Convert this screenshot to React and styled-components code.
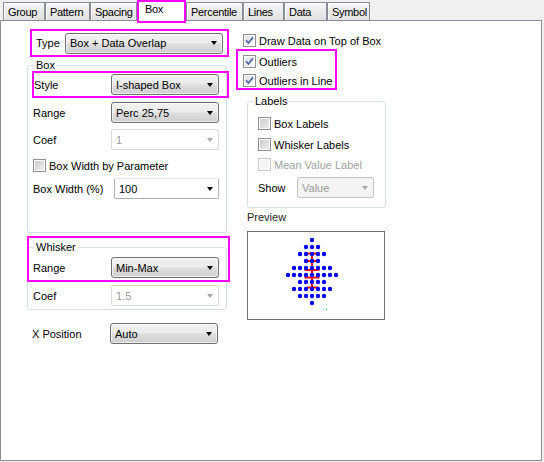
import React from 'react';
import styled, { createGlobalStyle } from 'styled-components';

const GlobalStyle = createGlobalStyle`
  html, body {
    margin: 0;
    padding: 0;
    background: #f0f0f0;
  }
  body {
    font-family: "Liberation Sans", Arial, sans-serif;
    font-size: 11px;
    color: #000;
  }
`;

const Window = styled.div`
  width: 544px;
  height: 462px;
  background: #f0f0f0;
`;

const TabBar = styled.div`
  display: flex;
  align-items: flex-end;
  height: 20px;
  padding-left: 3px;
  position: relative;
  z-index: 2;
`;

const Tab = styled.div`
  box-sizing: border-box;
  width: ${({ $w }) => $w}px;
  height: 18px;
  padding: 3px 0 0 4px;
  line-height: 13px;
  letter-spacing: -0.3px;
  border: 1px solid #898c95;
  border-bottom: none;
  background: linear-gradient(#f5f5f5, #ebebeb 50%, #e1e1e1);
  box-shadow: inset 1px 1px 0 #fff;
  white-space: nowrap;
  overflow: hidden;
`;

const ActiveTab = styled.div`
  box-sizing: border-box;
  width: ${({ $w }) => $w}px;
  height: 19px;
  margin: 2px 2px -1px 2px;
  padding: 1px 0 0 6px;
  line-height: 13px;
  letter-spacing: -0.3px;
  background: #fff;
  outline: 2px solid #ff00ff;
  align-self: flex-start;
`;

const Panel = styled.div`
  box-sizing: border-box;
  width: 542px;
  height: 441px;
  border: 1px solid #898c95;
  background: #fff;
  display: flex;
  padding-left: 26px;
  gap: 16px;
`;

const Column = styled.div`
  display: flex;
  flex-direction: column;
  width: ${({ $w }) => $w}px;
  padding-top: ${({ $pt }) => $pt}px;
`;

const Row = styled.div`
  display: flex;
  align-items: center;
  height: ${({ $h }) => $h || 21}px;
  margin-top: ${({ $mt }) => $mt || 0}px;
  margin-left: ${({ $ml }) => $ml || 0}px;
  white-space: nowrap;
`;

const MarkedRow = styled(Row)`
  width: ${({ $w }) => $w}px;
  outline: 2px solid #ff00ff;
  position: relative;
  z-index: 1;
`;

const Label = styled.span`
  box-sizing: border-box;
  width: ${({ $w }) => $w}px;
  padding-left: ${({ $pl }) => $pl || 0}px;
  color: ${({ $disabled }) => ($disabled ? '#a0a0a0' : '#000')};
`;

const Group = styled.div`
  box-sizing: border-box;
  position: relative;
  width: ${({ $w }) => $w}px;
  height: ${({ $h }) => $h}px;
  margin-top: ${({ $mt }) => $mt}px;
  margin-left: ${({ $ml }) => $ml || 0}px;
  border: 1px solid #d5dfe5;
  border-radius: 3px;
  display: flex;
  flex-direction: column;
`;

const Legend = styled.span`
  position: absolute;
  top: -7px;
  left: ${({ $left }) => $left}px;
  padding: 0 2px;
  line-height: 13px;
  background: #fff;
`;

const Mark = styled.div`
  position: absolute;
  left: -1px;
  top: -12px;
  width: 203px;
  height: 46px;
  box-sizing: border-box;
  border: 2px solid #ff00ff;
  pointer-events: none;
  z-index: 2;
`;

const comboSkins = {
  button: `
    border: 1px solid #707070;
    border-radius: 3px;
    background: linear-gradient(#f2f2f2, #ebebeb 45%, #dddddd 55%, #cfcfcf);
    box-shadow: inset 0 0 0 1px rgba(255,255,255,0.6);
    color: #000;
  `,
  edit: `
    border: 1px solid #abadb3;
    border-top-color: #e3e3e3;
    border-radius: 2px;
    background: #fff;
    color: #000;
  `,
  disabled: `
    border: 1px solid #d9d9d9;
    border-radius: 2px;
    background: #fff;
    color: #9a9a9a;
  `,
  disabledFill: `
    border: 1px solid #c2c2c2;
    border-radius: 3px;
    background: #f4f4f4;
    color: #9a9a9a;
  `,
};

const ComboBox = styled.div`
  box-sizing: border-box;
  width: ${({ $w }) => $w}px;
  height: 21px;
  display: flex;
  align-items: center;
  padding-left: 4px;
  ${({ $skin }) => comboSkins[$skin]}
`;

const Arrow = styled.span`
  margin-left: auto;
  margin-right: 5px;
  width: 0;
  height: 0;
  border-left: 3.5px solid transparent;
  border-right: 3.5px solid transparent;
  border-top: 4px solid ${({ $disabled }) => ($disabled ? '#a8a8a8' : '#000')};
`;

const Box = styled.span`
  box-sizing: border-box;
  flex: none;
  width: 13px;
  height: 13px;
  margin-right: 3px;
  display: flex;
  align-items: center;
  justify-content: center;
  border: 1px solid ${({ $disabled }) => ($disabled ? '#c7c7c7' : '#8f8f8f')};
  box-shadow: inset 0 0 0 1px #fff;
  background: ${({ $checked, $disabled }) =>
    $disabled
      ? '#f4f4f4'
      : $checked
      ? 'linear-gradient(135deg, #dfe3ea, #f7f8fa)'
      : 'linear-gradient(135deg, #c8c8c8, #f2f2f2)'};
`;

const Outliers = styled.div`
  box-sizing: border-box;
  width: 97px;
  margin: 4px 0 0 -5px;
  padding: 4px 0 1px 5px;
  outline: 2px solid #ff00ff;
  display: flex;
  flex-direction: column;
  gap: 6px;
`;

const Caption = styled.div`
  margin: 3px 0 0 4px;
  line-height: 13px;
  color: #222;
`;

const PreviewFrame = styled.div`
  box-sizing: border-box;
  width: 138px;
  height: 89px;
  margin: 7px 0 0 4px;
  border: 1px solid #6e6e6e;
  background: #fff;
`;

function Combo({ w, skin = 'button', children }) {
  const disabled = skin === 'disabled' || skin === 'disabledFill';
  return (
    <ComboBox $w={w} $skin={skin}>
      {children}
      <Arrow $disabled={disabled} />
    </ComboBox>
  );
}

function Check({ checked, disabled, label, mt, ml, h = 13 }) {
  return (
    <Row $h={h} $mt={mt} $ml={ml}>
      <Box $checked={checked} $disabled={disabled}>
        {checked && (
          <svg width="9" height="9" viewBox="0 0 9 9">
            <path d="M1 4.3 L3.4 7 L8 1.3" fill="none" stroke="#4a5f97" strokeWidth="1.7" />
          </svg>
        )}
      </Box>
      <Label $disabled={disabled}>{label}</Label>
    </Row>
  );
}

// half width (in columns) of each dot row in the preview
const dotRows = [0, 1, 2, 1, 3, 4, 2, 3, 2, 0];

function Preview() {
  const dots = [];
  dotRows.forEach((half, r) => {
    for (let k = -half; k <= half; k++) {
      dots.push(<circle key={`${r}-${k}`} cx={64 + k * 6} cy={8 + r * 7} r="2.2" fill="#0000ff" />);
    }
  });
  return (
    <PreviewFrame>
      <svg width="136" height="87" viewBox="0 0 136 87">
        <g stroke="#ff0000" strokeWidth="2">
          <line x1="64" y1="20.5" x2="64" y2="56" />
          <line x1="58" y1="21.5" x2="70" y2="21.5" />
          <line x1="58" y1="29" x2="70" y2="29" />
          <line x1="56.5" y1="38" x2="71.5" y2="38" />
          <line x1="56.5" y1="45.5" x2="71.5" y2="45.5" />
          <line x1="59" y1="55.5" x2="70" y2="55.5" />
        </g>
        {dots}
        <rect x="78" y="77" width="1" height="1" fill="#00dd00" />
      </svg>
    </PreviewFrame>
  );
}

const tabs = [
  ['Group', 42],
  ['Pattern', 45],
  ['Spacing', 47],
  ['Box', 45, true],
  ['Percentile', 57],
  ['Lines', 41],
  ['Data', 43],
  ['Symbol', 43],
];

export default function App() {
  return (
    <Window>
      <GlobalStyle />
      <TabBar>
        {tabs.map(([name, w, active]) =>
          active ? (
            <ActiveTab key={name} $w={w}>{name}</ActiveTab>
          ) : (
            <Tab key={name} $w={w}>{name}</Tab>
          )
        )}
      </TabBar>

      <Panel>
        <Column $w={200} $pt={10}>
          <MarkedRow $h={24} $ml={5} $w={195}>
            <Label $w={33} $pl={4}>Type</Label>
            <Combo w={158}>Box + Data Overlap</Combo>
          </MarkedRow>

          <Group $w={200} $h={168} $mt={10}>
            <Legend $left={6}>Box</Legend>
            <MarkedRow $h={23} $mt={7} $ml={6} $w={193}>
              <Label $w={77}>Style</Label>
              <Combo w={108}>I-shaped Box</Combo>
            </MarkedRow>
            <Row $mt={6} $ml={5}>
              <Label $w={78}>Range</Label>
              <Combo w={108}>Perc 25,75</Combo>
            </Row>
            <Row $mt={6} $ml={5}>
              <Label $w={78}>Coef</Label>
              <Combo w={108} skin="disabled">1</Combo>
            </Row>
            <Check label="Box Width by Parameter" mt={9} ml={5} />
            <Row $mt={6} $ml={5}>
              <Label $w={81}>Box Width (%)</Label>
              <Combo w={105} skin="edit">100</Combo>
            </Row>
          </Group>

          <Group $w={200} $h={63} $mt={14}>
            <Mark />
            <Legend $left={6}>Whisker</Legend>
            <Row $mt={9} $ml={5}>
              <Label $w={78}>Range</Label>
              <Combo w={108}>Min-Max</Combo>
            </Row>
            <Row $mt={7} $ml={5}>
              <Label $w={78}>Coef</Label>
              <Combo w={108} skin="disabled">1.5</Combo>
            </Row>
          </Group>

          <Row $mt={13} $ml={5}>
            <Label $w={78}>X Position</Label>
            <Combo w={108}>Auto</Combo>
          </Row>
        </Column>

        <Column $w={160} $pt={13}>
          <Check checked label="Draw Data on Top of Box" />
          <Outliers>
            <Check checked label="Outliers" />
            <Check checked label="Outliers in Line" />
          </Outliers>

          <Group $w={139} $h={107} $mt={13} $ml={4}>
            <Legend $left={5}>Labels</Legend>
            <Check label="Box Labels" mt={15} ml={10} />
            <Check label="Whisker Labels" mt={8} ml={10} />
            <Check disabled label="Mean Value Label" mt={7} ml={10} />
            <Row $mt={6} $ml={10}>
              <Label $w={39}>Show</Label>
              <Combo w={77} skin="disabledFill">Value</Combo>
            </Row>
          </Group>

          <Caption>Preview</Caption>
          <Preview />
        </Column>
      </Panel>
    </Window>
  );
}
